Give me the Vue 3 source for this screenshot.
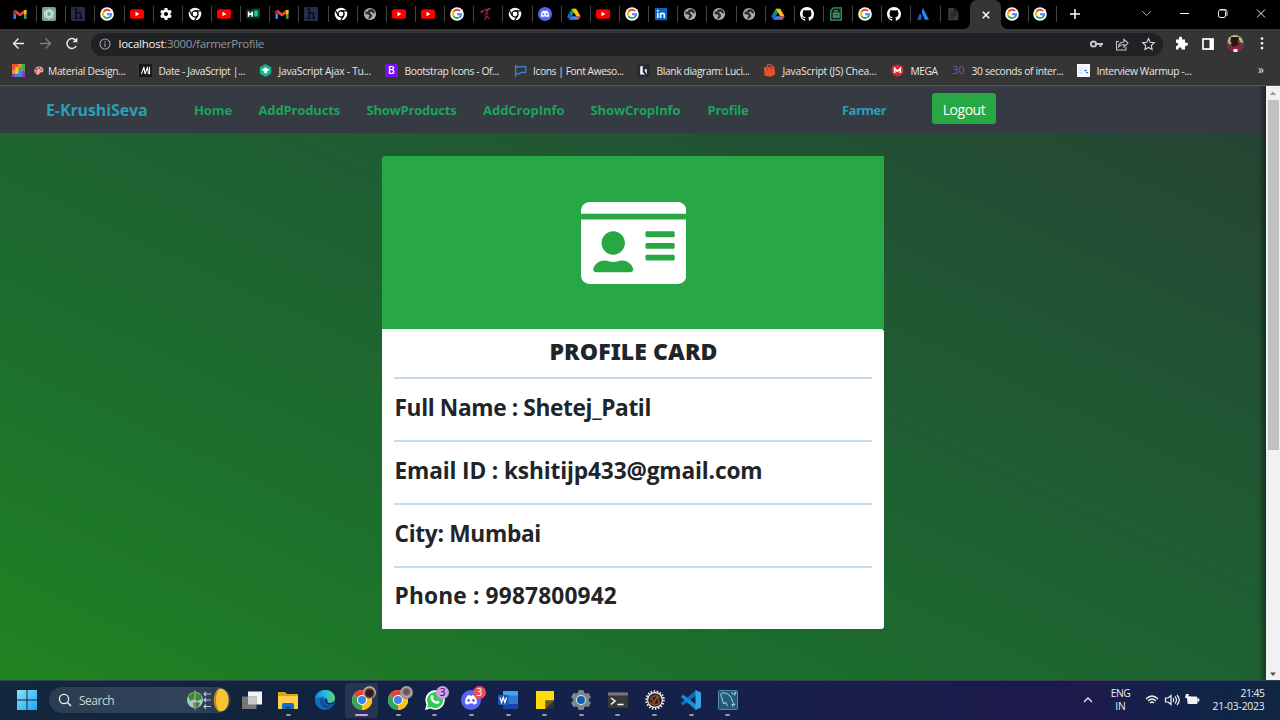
<script setup>
const tabIcons = [
  'gmail', 'gpt', 'hbox', 'google', 'youtube', 'gear', 'chromew', 'youtube', 'he', 'gmail', 'hbox',
  'chromew', 'globe', 'youtube', 'youtube', 'google', 'runner', 'chromew', 'discord', 'drive', 'youtube', 'google',
  'linkedin', 'globe', 'globe', 'globe', 'drive', 'github', 'sheet', 'google', 'github', 'atlassian', 'doc'
]

const bookmarks = [
  { icon: 'mosaic', width: 20.5, label: '', text: 0 },
  { icon: 'palette', width: 106.5, label: 'Material Design...', text: 77.5 },
  { icon: 'mdn', width: 120, label: 'Date - JavaScript |...', text: 86.5 },
  { icon: 'leaf', width: 126, label: 'JavaScript Ajax - Tu...', text: 92.5 },
  { icon: 'boot', mark: 'B', width: 128.5, label: 'Bootstrap Icons - Of...', text: 94.5 },
  { icon: 'flag', width: 123.5, label: 'Icons | Font Aweso...', text: 90.5 },
  { icon: 'lucid', width: 126, label: 'Blank diagram: Luci...', text: 93 },
  { icon: 'bag', width: 128, label: 'JavaScript (JS) Chea...', text: 94 },
  { icon: 'mega', width: 61, label: 'MEGA', text: 27 },
  { icon: 'thirty', mark: '30', width: 125, label: '30 seconds of inter...', text: 92 },
  { icon: 'warm', width: 130, label: 'Interview Warmup -...', text: 95 }
]

const links = [
  { label: 'Home', text: 38, gap: 26.5 },
  { label: 'AddProducts', text: 81.5, gap: 26.5 },
  { label: 'ShowProducts', text: 90, gap: 26.5 },
  { label: 'AddCropInfo', text: 81.5, gap: 26 },
  { label: 'ShowCropInfo', text: 90, gap: 27 },
  { label: 'Profile', text: 41, gap: 0 }
]

const details = [
  { label: 'Full Name : Shetej_Patil', text: 256.5 },
  { label: 'Email ID : kshitijp433@gmail.com', text: 368 },
  { label: 'City: Mumbai', text: 146.5 },
  { label: 'Phone : 9987800942', text: 222.5 }
]

const apps = [
  { icon: 'taskview' },
  { icon: 'folder', run: true },
  { icon: 'edge' },
  { icon: 'chrome', active: true, avatar: 'dark' },
  { icon: 'chrome', run: true, avatar: 'light' },
  { icon: 'whatsapp', run: true, badge: '3', tone: 'violet' },
  { icon: 'discord', run: true, badge: '3', tone: 'red' },
  { icon: 'word', run: true },
  { icon: 'notes', run: true },
  { icon: 'settings', run: true },
  { icon: 'terminal', run: true },
  { icon: 'eclipse', run: true },
  { icon: 'vscode', run: true },
  { icon: 'mysql', run: true }
]

// Tracks a label out (or in) so that it takes up the given width in pixels.
const vFit = {
  mounted(el, { value }) {
    const count = el.textContent.length
    if (!value || !count) return
    const natural = el.getBoundingClientRect().width
    el.style.letterSpacing = (value - natural) / count + 'px'
  }
}
</script>

<template>
  <div class="screen">
    <svg class="defs" aria-hidden="true">
      <symbol id="gmail" viewBox="0 0 16 16">
        <path d="M2 13.5V4.5" stroke="#4285f4" stroke-width="3" /><path d="M14 13.5V4.5" stroke="#34a853" stroke-width="3" />
        <path d="M2 4.5 8 9l6-4.500" fill="none" stroke="#ea4335" stroke-width="3.200" stroke-linejoin="round" />
        <path d="M12.500 3.500 15.500 3v4l-3 2z" fill="#fbbc04" /><path d="M.5 3.500 3.500 5v4L.5 7z" fill="#c5221f" />
      </symbol>
      <symbol id="gpt" viewBox="0 0 16 16">
        <rect x="0" y="0" width="16" height="16" rx="2" fill="#74a593" />
        <g fill="none" stroke="#dcebe5" stroke-width="1.100"><ellipse cx="8" cy="8" rx="2.700" ry="5.500" /><ellipse cx="8" cy="8" rx="2.700" ry="5.500" transform="rotate(60 8 8)" /><ellipse cx="8" cy="8" rx="2.700" ry="5.500" transform="rotate(120 8 8)" /></g>
      </symbol>
      <symbol id="hbox" viewBox="0 0 16 16">
        <rect width="16" height="16" rx="1" fill="#252d4b" />
        <path d="M4 2.500h2V13M4 13h4M6 7.500c2-2 5-1.500 5 .5v5M9.500 13H13" fill="none" stroke="#080b18" stroke-width="1.700" />
      </symbol>
      <symbol id="google" viewBox="0 0 16 16">
        <circle cx="8" cy="8" r="7.800" fill="#fff" />
        <g fill="none" stroke-width="2.300"><path d="M4.100 5.400A4.700 4.700 0 0 1 11.500 4.700" stroke="#ea4335" /><path d="M4.100 10.600a4.700 4.700 0 0 1 0-5.200" stroke="#fbbc05" /><path d="M11.300 11.300a4.700 4.700 0 0 1-7.200-.7" stroke="#34a853" /><path d="M8 8.200h4.700c0 1.300-.5 2.400-1.400 3.200" stroke="#4285f4" /></g>
      </symbol>
      <symbol id="youtube" viewBox="0 0 16 16"><rect y="2.500" width="16" height="11" rx="3" fill="#f00" /><path d="M6.300 5.500v5L10.700 8z" fill="#fff" /></symbol>
      <symbol id="gear" viewBox="0 0 16 16">
        <g fill="#fff"><circle cx="8" cy="8" r="5.200" /><rect x="6.300" y="1.200" width="3.400" height="13.600" rx=".6" /><rect x="6.300" y="1.200" width="3.400" height="13.600" rx=".6" transform="rotate(60 8 8)" /><rect x="6.300" y="1.200" width="3.400" height="13.600" rx=".6" transform="rotate(120 8 8)" /></g><circle cx="8" cy="8" r="2.400" fill="#000" />
      </symbol>
      <symbol id="chromew" viewBox="0 0 16 16">
        <circle cx="8" cy="8" r="7.200" fill="#fff" /><circle cx="8" cy="8" r="3.500" fill="none" stroke="#000" stroke-width="1.400" />
        <path d="M8 4.500h6.500M5 9.800 1.800 4.300M11 9.800 7.700 15.500" stroke="#000" stroke-width="1.400" />
      </symbol>
      <symbol id="he" viewBox="0 0 16 16"><rect y="2" width="16" height="12" fill="#14202b" /><rect x="8" y="2" width="8" height="9" fill="#0b4c45" /><path d="M3 5v6M7 5v6M3 8h4" stroke="#fff" stroke-width="2" /><path d="M9.500 4.200h4v6.600h-4z" fill="#10db62" /></symbol>
      <symbol id="globe" viewBox="0 0 16 16"><circle cx="8" cy="8" r="7" fill="#a9acaf" /><path d="M8.500 2.500c-2 0-3 1.500-2.500 2.500H3.500L2.500 8l4 .5 1.500 2H6.500v3.500h1l3-3.500-.5-2L8.500 7 7 6.500l3-1.500 1.500 2H14l-1.500-3-2-1.500z" fill="#292a2d" /></symbol>
      <symbol id="runner" viewBox="0 0 16 16"><path d="M2 7 7 3l5-1-4 4M7 7l3-1M6 10l3 1-3 4M9 10l3 4" fill="none" stroke="#7d2030" stroke-width="1.500" /><path d="M8 3.500 13 2M2 5.500 5 4" stroke="#615558" stroke-width="1.400" /><circle cx="8.500" cy="7.500" r="2" fill="#6d1427" /></symbol>
      <symbol id="discord" viewBox="0 0 16 16">
        <circle cx="8" cy="8" r="8" fill="#5865f2" />
        <path d="M5 4.600c1-.5 1.500-.5 2-.6l.3.6h1.400l.3-.6c.5.100 1 .100 2 .6 1.400 2 1.900 4 1.700 6-.8.700-1.600 1-2.300 1.200l-.7-1H6.300l-.7 1c-.8-.2-1.600-.5-2.300-1.200-.2-2 .3-4 1.700-6z" fill="#fff" /><circle cx="6.100" cy="8.300" r="1.100" fill="#5865f2" /><circle cx="9.900" cy="8.300" r="1.100" fill="#5865f2" />
      </symbol>
      <symbol id="drive" viewBox="0 0 16 16"><path d="M5.500 2h5L8 6.300 3 14.500.5 10.500z" fill="#0f9d58" /><path d="M5.500 2h5l5 8.500h-5z" fill="#ffc107" /><path d="M3 14.500.5 10.500l2.500-4L5.600 10z" fill="#1967d2" /><path d="M5.500 10.500h10L13 14.500H3z" fill="#4285f4" /><path d="M10.500 10.500h5L13 14.500z" fill="#ea4335" /></symbol>
      <symbol id="linkedin" viewBox="0 0 16 16"><rect x="1" y="1" width="14" height="14" rx="1" fill="#0a66c2" /><path d="M4.300 6.500v6M7.500 12.500v-6M7.500 9c0-2.500 4.300-2.500 4.300 0v3.500" fill="none" stroke="#fff" stroke-width="1.800" /><circle cx="4.300" cy="4.200" r="1.150" fill="#fff" /></symbol>
      <symbol id="github" viewBox="0 0 16 16"><path fill="#fff" d="M8 0C3.580 0 0 3.580 0 8c0 3.540 2.290 6.530 5.470 7.590.4.070.55-.17.55-.38 0-.19-.01-.82-.01-1.490-2.010.37-2.530-.49-2.690-.94-.09-.23-.48-.94-.82-1.130-.28-.15-.68-.52-.01-.53.63-.01 1.080.58 1.230.82.72 1.210 1.870.87 2.330.66.07-.52.28-.87.51-1.070-1.780-.2-3.640-.89-3.640-3.950 0-.87.31-1.590.82-2.150-.08-.2-.36-1.020.08-2.120 0 0 .67-.21 2.200.82a7.420 7.420 0 0 1 4 0c1.530-1.040 2.200-.82 2.200-.82.44 1.100.16 1.920.08 2.120.51.56.82 1.270.82 2.150 0 3.070-1.870 3.750-3.650 3.950.29.25.54.73.54 1.480 0 1.070-.01 1.930-.01 2.200 0 .21.15.46.55.38A8.010 8.010 0 0 0 16 8c0-4.420-3.580-8-8-8z" /></symbol>
      <symbol id="sheet" viewBox="0 0 16 16"><path d="M5 1h9v14H2V4z" fill="#0c2117" stroke="#3f8d65" stroke-width="1.500" /><path d="M5.500 4.500h5M5 7h6.500v4.500H5z" stroke="#4b9b70" stroke-width="1.300" fill="#2c6e4a" /></symbol>
      <symbol id="atlassian" viewBox="0 0 16 16"><path d="M4.500 7c2 2 2.500 4.500 1.500 7.500H1.200z" fill="#1763d1" /><path d="M8 1.200 14.800 14.500H10C8.500 10 5 6.500 8 1.200z" fill="#2684ff" /></symbol>
      <symbol id="doc" viewBox="0 0 16 16"><path d="M2.500 1h7L14 5.500V15H2.500z" fill="#3c3c3c" /><path d="M9.500 1v4.500H14M5 7.500h6.500M5 10h6.500M5 12.500h4" stroke="#111" fill="none" /></symbol>

      <symbol id="mosaic" viewBox="0 0 16 16"><rect width="16" height="16" fill="#f6c928" /><path d="M0 0h4v8H0zM4 0h4v4H4z" fill="#f04e36" /><path d="M8 0h4v4H8zM0 8h4v4H0z" fill="#f7912d" /><path d="M12 0h4v8h-4zM8 4h4v4H8z" fill="#42ae53" /><path d="M8 8h4v8H8zM4 12h4v4H4z" fill="#3b82e3" /><path d="M12 8h4v8h-4zM0 12h4v4H0z" fill="#7549b7" /></symbol>
      <symbol id="palette" viewBox="0 0 16 16"><path d="M9 2c8 0 8 10 2 9-3 0 0 4-4 3-8-2-6-12 2-12z" fill="#f0a9a9" /><circle cx="5" cy="6" r="1.600" fill="#803c38" /><circle cx="9" cy="4.500" r="1.500" fill="#ab4f6b" /><circle cx="4.500" cy="10" r="1.400" fill="#d44a44" /><circle cx="12" cy="7" r="1.500" fill="#5b7085" /></symbol>
      <symbol id="mdn" viewBox="0 0 16 16"><rect width="16" height="16" fill="#17171a" /><path d="m3 12.500 3-9 1.500 9 3-9 1 9M13 3.500v9" fill="none" stroke="#fff" stroke-width="1.300" /></symbol>
      <symbol id="leaf" viewBox="0 0 16 16"><path d="m8 0 7 4v8l-7 4-7-4V4z" fill="#14b391" /><path d="m3 7.500 5-3.500 5 3.500-3 1.500v2.500H6V9z" fill="#e9fff8" /></symbol>
      <symbol id="flag" viewBox="0 0 16 16"><path d="M2 1v15M2 3.500h12.500v7H9c-1.500 0-1 1.500-3 1.500H2" fill="none" stroke="#397fc4" stroke-width="1.800" /></symbol>
      <symbol id="lucid" viewBox="0 0 16 16"><rect width="16" height="16" rx="1" fill="#222b36" /><path d="m4 3 3-1v8l3 3H4z" fill="#fff" /><path d="m9 7 3-1v7z" fill="#fff" /></symbol>
      <symbol id="bag" viewBox="0 0 16 16"><path d="m1 4 13-1 1 10-6 3-7-2z" fill="#e65127" /><path d="M5 6V3c0-3 6-3 6 0v3" stroke="#db502b" stroke-width="1.500" fill="none" /><path d="M5 5v2M10 4v3" stroke="#7d341c" /></symbol>
      <symbol id="mega" viewBox="0 0 16 16"><circle cx="8" cy="8" r="7.500" fill="#d9272e" /><path d="M4.500 11V5.500L8 9l3.500-3.500V11" fill="none" stroke="#fff" stroke-width="2" /></symbol>
      <symbol id="warm" viewBox="0 0 16 16"><rect width="16" height="16" fill="#f7f9fd" /><path d="M2 5h5M2 8h5M2 11h5" stroke="#d1daf3" stroke-width="1.500" /><path d="M9 8h3M11 10.500h2.500" stroke="#4667ea" stroke-width="1.600" /></symbol>

      <symbol id="windows" viewBox="0 0 20 20"><linearGradient id="gw" x1="0" y1="0" x2="1" y2="1"><stop stop-color="#8be1fb" /><stop offset="1" stop-color="#1aa7f5" /></linearGradient><path d="M0 0h9.500v9.500H0zM10.500 0H20v9.500h-9.500zM0 10.500h9.500V20H0zM10.500 10.500H20V20h-9.500z" fill="url(#gw)" /></symbol>
      <symbol id="taskview" viewBox="0 0 20 20"><path d="M6 1.500h14v13H6z" fill="#f3f3f3" /><path d="M0 6.500h14.500V19H0z" fill="#777" /><path d="M6 6.500h8.500v8H6z" fill="#c8c8c8" /></symbol>
      <symbol id="folder" viewBox="0 0 20 20"><path d="M0 2h7l2 2h11v15H0z" fill="#e1a318" /><path d="M0 6h20v13H0z" fill="#ffcf48" /><path d="M4 19v-4q0-2 2-2h8q2 0 2 2v4z" fill="#0b70c6" /><path d="M7 16.500h6V19H7z" fill="#164c88" /></symbol>
      <symbol id="edge" viewBox="0 0 20 20"><linearGradient id="ge" x1="0" x2="1"><stop stop-color="#168de0" /><stop offset=".55" stop-color="#26bad9" /><stop offset="1" stop-color="#65d75d" /></linearGradient><circle cx="10" cy="10" r="10" fill="#126fbd" /><path d="M0 9C1-3 19-3 20 8c0 5-6 6-8 4 2-4-6-8-12-3z" fill="url(#ge)" /><path d="M6 8c-3 6 2 12 9 10 2-.5 3-2 3.500-3.500C14 17 8 15 9 10z" fill="#154c9b" /><path d="M10.500 8.500c-1 2-.5 5 3 6 2 .4 4-.3 5.500-1.500L20 10c-1 3-7 4-8 2 1-1 .5-3-1.500-3.500z" fill="#122545" /></symbol>
      <symbol id="chrome" viewBox="0 0 20 20"><circle cx="10" cy="10" r="10" fill="#fff" /><path d="M10 10 1.340 5A10 10 0 0 1 18.660 5z" fill="#e94335" /><path d="M10 10 18.660 5A10 10 0 0 1 10 20z" fill="#fbc116" /><path d="M10 10v10A10 10 0 0 1 1.340 5z" fill="#33a852" /><path d="M10 5h8.660l-4.300 7.500z" fill="#fbc116" /><circle cx="10" cy="10" r="5" fill="#fff" /><circle cx="10" cy="10" r="4" fill="#3d82ee" /></symbol>
      <symbol id="whatsapp" viewBox="0 0 20 20"><path d="M0 20 1.500 14.500A9.700 9.700 0 1 1 5.500 18.500z" fill="#fff" /><path d="M2.200 18 3.200 14A8 8 0 1 1 6 16.900z" fill="#2fcc54" /><path d="M6.400 5.500c1-1 1.600 0 2 1.200.7 1.200-.6 1.300-.3 2.100 1 1.700 1.800 2.300 3 2.700.6.200.9-1 1.500-.9 1 .4 2.400.9 2 1.700-1 2.500-3.800 1.800-5.800.5-2-1.400-4.800-4.700-2.400-7.300z" fill="#fff" /></symbol>
      <symbol id="word" viewBox="0 0 20 20"><path d="M5 1h15v18H5z" fill="#2f79cf" /><path d="M5 1h15v4.500H5z" fill="#42a5ee" /><path d="M5 14h15v5H5z" fill="#1447a5" /><rect y="5" width="10.500" height="10" rx="1" fill="#1759bd" /><path d="m2 7.500 1.600 5 1.700-5 1.600 5 1.700-5" fill="none" stroke="#fff" stroke-width="1.200" /></symbol>
      <symbol id="notes" viewBox="0 0 20 20"><path d="M1 1h18v18H1z" fill="#ffdc08" /><path d="M10.500 10.500H19V19h-8.500z" fill="#2e3140" /><path d="M10.500 19v-8.500H19z" fill="#6b5a26" /></symbol>
      <symbol id="settings" viewBox="0 0 20 20"><g fill="#7e8790"><circle cx="10" cy="10" r="8" /><rect x="7" width="6" height="20" rx="1.500" /><rect x="7" width="6" height="20" rx="1.500" transform="rotate(60 10 10)" /><rect x="7" width="6" height="20" rx="1.500" transform="rotate(120 10 10)" /></g><circle cx="10" cy="10" r="5" fill="#d7e3ed" /><circle cx="10" cy="10" r="4" fill="#115fac" /></symbol>
      <symbol id="terminal" viewBox="0 0 20 20"><path d="M0 2.500h20V18H0z" fill="#383838" /><path d="M0 2.500h20v3H0z" fill="#777" /><path d="M3 8l4 3-4 3.500M9.500 14.500h6" fill="none" stroke="#fff" stroke-width="1.500" /></symbol>
      <symbol id="eclipse" viewBox="0 0 20 20"><circle cx="10" cy="10" r="8.800" fill="none" stroke="#eee" stroke-width="2" stroke-dasharray="1.500 1.570" /><circle cx="10" cy="10" r="7.400" fill="#29211f" stroke="#eee" stroke-width="1.200" /><path d="M5 9q5-6 10-1M5 12q5 6 10 0M6 7l3 6 3-7 2 7" stroke="#8d4b2c" stroke-width="1.400" fill="none" /></symbol>
      <symbol id="vscode" viewBox="0 0 20 20"><path d="M15 0 0 13l2 2.500L17 4z" fill="#0873b9" /><path d="M15 20 0 7l2-2.500L17 16z" fill="#168dd7" /><path d="m14.500 0 5.500 2.500v15L14.500 20z" fill="#30a4ec" /></symbol>
      <symbol id="mysql" viewBox="0 0 20 20"><rect x=".5" y=".5" width="19" height="19" rx="1" fill="#235c7b" stroke="#488baa" /><path d="M4 8c-2-3-1-6 1-5 5 0 8 3 9 7 .5 2 2 3 3 5l-3-1 1 3M4 8c1 2 0 4 2 6l1.500-2 2 4M13 2.500l2.500 1.500L18 2l-1.500 3.500" fill="none" stroke="#b8d3e0" stroke-width="1" /></symbol>
    </svg>

    <header class="browser">
      <div class="tabs">
        <div class="tabstrip">
          <div v-for="(icon, i) in tabIcons" :key="i" class="tab"><svg class="fav"><use :href="'#' + icon" /></svg></div>
        </div>
        <div class="active-tab"><svg viewBox="0 0 8 8"><path d="m.8.8 6.400 6.400M7.200.8.800 7.200" stroke="#fff" stroke-width="1.500" /></svg></div>
        <div class="tab end"><svg class="fav"><use href="#google" /></svg></div>
        <div class="tab end"><svg class="fav"><use href="#google" /></svg></div>
        <svg class="plus" viewBox="0 0 10 10"><path d="M5 0v10M0 5h10" stroke="#fff" stroke-width="1.500" /></svg>
        <svg class="winctl" viewBox="0 0 140 24"><g fill="none" stroke="#e8e8e8" stroke-width="1"><path d="m12 10 4.500 4.500L21 10" stroke="#aaa" /><path d="M50 12.500h9" stroke="#fff" /><rect x="88.500" y="9" width="7" height="7.500" rx="1.500" /><path d="M90 8.500h5q2 0 2 2V15" /><path d="m127 8.500 8 8M135 8.500l-8 8" /></g></svg>
      </div>

      <div class="toolbar">
        <svg class="navicons" viewBox="0 0 91 30"><g fill="none" stroke-width="1.400"><path d="M24 14.500H13.500M18.500 9.500l-5 5 5 5" stroke="#eee" /><path d="M40 14.500h10.500M45.500 9.500l5 5-5 5" stroke="#7b7b7b" /><path d="M76.300 17a5 5 0 1 1-.3-5.500" stroke="#eee" /><path d="M77.300 8.500v4.800h-4.800z" fill="#eee" /></g></svg>
        <div class="address">
          <svg class="info" viewBox="0 0 12 12"><circle cx="6" cy="6" r="5" fill="none" stroke="#9aa0a6" stroke-width="1.100" /><path d="M6 5.300v3.500M6 3v1.200" stroke="#9aa0a6" stroke-width="1.200" /></svg>
          <span v-fit="145.5" class="url"><b>localhost</b>:3000/farmerProfile</span>
          <svg class="urlicons" viewBox="0 0 70 20"><g fill="none" stroke="#c3c5c7" stroke-width="1.100"><circle cx="5.500" cy="10" r="2.600" stroke-width="2" /><path d="M8 10h7M12.500 10v3" stroke-width="2" /><path d="M31 7.500h-2.500v8.500h9.500v-3M30.500 13c.5-3.500 3-5 5.500-5V5.300l4 3.800-4 3.800V10.500c-2 0-4 .7-5.500 2.500z" /><path d="m60.500 4.500 1.700 3.700 4.100.5-3 2.800.8 4-3.600-2-3.600 2 .8-4-3-2.800 4.100-.5z" stroke="#ddd" /></g></svg>
        </div>
        <svg class="ext" viewBox="0 0 100 30"><path d="M8 11h3c-1-4 4-4 3 0h3v3.200c4-.8 4 4 0 3.200V21h-3.500c.5-3-3.500-3-3 0H8v-3.600c3 .5 3-3.500 0-3z" fill="#fff" transform="translate(0 -.5)" /><rect x="35" y="10" width="10" height="10" fill="none" stroke="#fff" stroke-width="1.700" /><path d="M41.500 10h4v11h-4z" fill="#fff" /><circle cx="67.500" cy="14.500" r="9" fill="#5a3c35" /><path d="M60.500 9q6-6 13 0l2 5-4-1-3-4-5 4-4 1z" fill="#b9bd91" /><path d="M60.500 19q7-5 13 0-5 6-13 0z" fill="#9c1c42" /><path d="M63 8h8l-1 8-5 2-3-4z" fill="#2a1712" /><circle cx="62" cy="14" r="1.500" fill="#a7aa92" /><circle cx="71" cy="12" r="1.200" fill="#8b5140" /><path d="M65.500 20h4v3h-4z" fill="#f2e9ea" /><g fill="#fff"><circle cx="94" cy="9.500" r="1.300" /><circle cx="94" cy="14.300" r="1.300" /><circle cx="94" cy="19.100" r="1.300" /></g></svg>
      </div>

      <div class="bookmarks">
        <div v-for="b in bookmarks" :key="b.icon" class="bookmark" :class="b.icon" :style="{ width: b.width + 'px' }">
          <span v-if="b.mark" class="mark">{{ b.mark }}</span>
          <svg v-else><use :href="'#' + b.icon" /></svg>
          <span v-fit="b.text">{{ b.label }}</span>
        </div>
        <span class="more">»</span>
      </div>
    </header>

    <div class="viewport">
      <main class="page">
        <nav class="navbar">
          <a v-fit="101.5" class="brand">E-KrushiSeva</a>
          <div class="links"><a v-for="l in links" :key="l.label" v-fit="l.text" :style="{ marginRight: l.gap + 'px' }">{{ l.label }}</a></div>
          <a v-fit="44" class="role">Farmer</a>
          <button class="logout"><span v-fit="42.5">Logout</span></button>
        </nav>
        <section class="card">
          <div class="banner">
            <svg viewBox="0 32 576 448"><path fill="#fff" d="M528 32H48C21.500 32 0 53.500 0 80v16h576V80c0-26.500-21.500-48-48-48zM0 432c0 26.500 21.500 48 48 48h480c26.500 0 48-21.500 48-48V128H0v304zm352-232c0-4.400 3.600-8 8-8h144c4.400 0 8 3.600 8 8v16c0 4.400-3.600 8-8 8H360c-4.400 0-8-3.600-8-8v-16zm0 64c0-4.400 3.600-8 8-8h144c4.400 0 8 3.600 8 8v16c0 4.400-3.600 8-8 8H360c-4.400 0-8-3.600-8-8v-16zm0 64c0-4.400 3.600-8 8-8h144c4.400 0 8 3.600 8 8v16c0 4.400-3.600 8-8 8H360c-4.400 0-8-3.600-8-8v-16zM176 192c35.300 0 64 28.700 64 64s-28.700 64-64 64-64-28.700-64-64 28.700-64 64-64zM67.100 396.200C75.500 370.500 99.600 352 128 352h8.200c12.300 5.100 25.700 8 39.800 8s27.600-2.900 39.800-8h8.200c28.400 0 52.500 18.500 60.900 44.200 3.200 9.900-5.200 19.800-15.600 19.800H82.700c-10.400 0-18.800-10-15.600-19.800z" /></svg>
          </div>
          <div class="body">
            <h2><span v-fit="168">PROFILE CARD</span></h2>
            <div v-for="d in details" :key="d.label" class="row"><span v-fit="d.text">{{ d.label }}</span></div>
          </div>
        </section>
      </main>
      <div class="scrollbar">
        <svg viewBox="0 0 14 14"><path d="M4 9h6L7 5.500z" fill="#999" /></svg>
        <div class="thumb"></div>
        <svg class="down" viewBox="0 0 14 14"><path d="M4 5.500h6L7 9z" fill="#505050" /></svg>
      </div>
    </div>

    <footer class="taskbar">
      <svg class="start"><use href="#windows" /></svg>
      <div class="search">
        <svg class="glass" viewBox="0 0 14 14"><circle cx="6" cy="6" r="4.600" fill="none" stroke="#eee" stroke-width="1.300" /><path d="m9.500 9.500 3.500 3.500" stroke="#eee" stroke-width="1.400" /></svg>
        <span v-fit="35">Search</span>
        <svg class="equinox" viewBox="0 0 46 26"><circle cx="10" cy="13" r="8" fill="#a3c7d0" /><path d="M3 9l6-4 7 3 1 4-5 2-3-2-4 2z" fill="#378d32" /><path d="m8 16 4-1 3 1-2 4-4 1z" fill="#318743" /><path d="M10 3v20" stroke="#e4a06f" stroke-width="1" /><g stroke="#b7c7d2" stroke-width="1.200" fill="none"><path d="M19 7h7M21 5l-2 2 2 2M19 13h7M21 11l-2 2 2 2M19 19.500h7M21 17.500l-2 2 2 2" /></g><path d="M34 1.500c13-1 13 24 0 23-5-5-5-17 0-23z" fill="#f9c233" /><path d="M34 1.500c-4 6-4 17 0 23-7-4-7-19 0-23z" fill="#cf8119" /></svg>
      </div>
      <div class="apps">
        <div v-for="(a, i) in apps" :key="i" class="app" :class="{ active: a.active, run: a.run }">
          <svg class="glyph"><use :href="'#' + a.icon" /></svg>
          <i v-if="a.avatar" class="avatar" :class="a.avatar"></i>
          <i v-if="a.badge" class="badge" :class="a.tone">{{ a.badge }}</i>
        </div>
      </div>
      <div class="tray">
        <svg class="chev" viewBox="0 0 10 6"><path d="m1 5 4-4 4 4" fill="none" stroke="#eee" stroke-width="1.300" /></svg>
        <div class="lang"><span v-fit="19.5">ENG</span><span>IN</span></div>
        <svg class="status" viewBox="0 0 56 16"><g fill="none" stroke="#f2f2f2" stroke-width="1.200"><path d="M1 7q6-6 12 0M3 9q4-4 8 0M5 11q2-2 4 0" /><path d="M20.500 6h2.500l3-2.500v9L23 10h-2.500zM28 6q1.500 2 0 4M30 4.500q3 3.500 0 7M32 3q4.500 5 0 10" /><rect x="43" y="5" width="9" height="6.500" rx="1" fill="#f2f2f2" /><path d="M53.500 6.500v3" stroke-width="1.700" /></g><path d="M41 2h3l-1 2.500h3L42 9l.5-3H40z" fill="#fff" /></svg>
        <div class="clock"><span v-fit="24">21:45</span><span v-fit="52">21-03-2023</span></div>
      </div>
    </footer>
  </div>
</template>

<style>
body { overflow: hidden; background: #000; }
</style>

<style scoped>
* { box-sizing: border-box; }
.screen { width: 1280px; height: 720px; display: flex; flex-direction: column; overflow: hidden; font-family: "Open Sans", "Noto Sans", sans-serif; }
.defs { position: absolute; width: 0; height: 0; }
svg { display: block; flex: none; }
span, a { white-space: nowrap; display: inline-block; flex: none; }
.browser { height: 86px; background: #353535; border-bottom: 1px solid #555; flex: none; }
.tabs { height: 29px; background: #000; display: flex; align-items: center; padding-bottom: 1px; }
.tabstrip { display: flex; margin-left: 8px; width: 961.500px; }
.tab { width: 29.150px; height: 16px; border-right: 1px solid #444; padding-left: 5px; display: flex; align-items: center; flex: none; }
.tabstrip .tab:last-child { border: 0; }
.tab.end { width: 28px; padding-left: 4.500px; }
.fav { width: 14px; height: 14px; }
.active-tab { position: relative; width: 31px; height: 29px; margin-bottom: -1px; background: #353535; border-radius: 7px 7px 0 0; display: flex; align-items: center; justify-content: center; padding-left: 1px; }
.active-tab::before, .active-tab::after { content: ""; position: absolute; bottom: 0; width: 6px; height: 6px; }
.active-tab::before { left: -6px; background: radial-gradient(circle at 0 0, transparent 5.500px, #353535 6px); }
.active-tab::after { right: -6px; background: radial-gradient(circle at 100% 0, transparent 5.500px, #353535 6px); }
.active-tab svg { width: 8px; height: 8px; }
.plus { width: 10px; height: 10px; margin-left: 13px; }
.winctl { width: 140px; height: 24px; margin-left: 50px; margin-bottom: 3px; }
.toolbar { height: 30px; display: flex; align-items: center; }
.navicons { width: 91px; height: 30px; }
.address { width: 1072px; height: 23px; border-radius: 12px; background: #202124; display: flex; align-items: center; }
.info { width: 12px; height: 12px; margin-left: 8px; }
.url { margin: -2px 0 0 7.500px; font-size: 11.500px; color: #92969a; }
.url b { font-weight: 400; color: #f1f1f1; }
.urlicons { width: 70px; height: 20px; margin-left: auto; margin-right: 5.500px; }
.ext { width: 100px; height: 30px; margin-left: 5px; }
.bookmarks { height: 23px; display: flex; align-items: center; padding-left: 12px; color: #e6e6e6; font-size: 10.300px; }
.bookmark { display: flex; align-items: center; flex: none; }
.bookmark svg { width: 13px; height: 13px; margin-right: 6.500px; }
.bookmark.palette svg { width: 11px; height: 11px; margin-right: 4.500px; }
.mark { width: 13px; height: 13px; margin-right: 6.500px; line-height: 13px; text-align: center; }
.boot .mark { background: #7212ee; color: #fff; border-radius: 1px; font-weight: 600; }
.thirty .mark { color: #8059ae; }
.more { margin-left: 51px; font-size: 12px; margin-top: -3px; }

.viewport { height: 595px; display: flex; flex: none; }
.page { position: relative; width: 1266px; background: linear-gradient(to top right, #218321 0%, #1c712c 26%, #1e6232 50%, #215333 74%, #274234 100%); }
.page::after { content: ""; position: absolute; right: 0; top: 0; width: 8px; height: 100%; background: linear-gradient(to right, transparent, rgba(0, 0, 0, .4)); }
.navbar { height: 47px; background: #363a42; display: flex; align-items: center; padding: 0 0 0 46px; font-weight: 700; font-size: 13px; color: #1da35c; }
.brand { font-size: 16px; font-weight: 700; color: #28a0b5; }
.links { display: flex; margin-left: 46.500px; }
.role { margin-left: 93.500px; color: #2c9fbb; }
.logout { width: 64px; height: 31px; margin: -2px 0 0 46px; padding: 1px 0 0; border: 0; border-radius: 3px; background: #28a745; color: #fff; font: 14px "Open Sans", sans-serif; }
.card { width: 502px; margin: 23px 0 0 382px; }
.banner { height: 173px; background: #28a745; border-radius: 3px 0 0 0; display: flex; justify-content: center; padding: 45.500px 0 0 1px; }
.banner svg { width: 105.500px; height: 82px; }
.body { height: 300px; background: #fff; border-radius: 0 3px 3px 0; padding: 0 12px; color: #212529; }
h2 { margin: 0; height: 48px; padding: 6px 0 0 1px; text-align: center; font-size: 23px; font-weight: 900; line-height: 32px; font-family: "Noto Sans", "Open Sans", sans-serif; }
.row { height: 63px; border-top: 2px solid #c5dcee; padding: 13px 0 0 .5px; font-size: 22.700px; font-weight: 700; line-height: 32px; }
.row:last-child { padding-top: 12px; }
.scrollbar { width: 14px; background: #f1f1f1; display: flex; flex-direction: column; align-items: center; }
.scrollbar svg { width: 14px; height: 14px; }
.thumb { width: 11px; height: 350px; background: #c1c1c1; }
.down { margin-top: auto; }

.taskbar { height: 39px; background: linear-gradient(90deg, #12283d 0, #11233e 22%, #13224a 36%, #172049 60%, #1c1a4b 80%, #1c1b4c 86%, #102449 93%, #0f2742 100%); box-shadow: 0 -1px 0 #30474f; position: relative; display: flex; align-items: center; color: #eee; flex: none; padding-bottom: 1px; }
.start { width: 20px; height: 20px; margin-left: 17px; }
.search { width: 182px; height: 26px; margin-left: 12px; border-radius: 13px; background: linear-gradient(90deg, #2a3d50, #304359 75%, #263b51); display: flex; align-items: center; font-size: 12px; color: #d1d5d9; }
.glass { width: 14px; height: 14px; margin: 0 7px 0 9px; }
.equinox { width: 46px; height: 26px; margin-left: auto; }
.apps { display: flex; height: 38px; margin-left: 2.400px; }
.app { position: relative; width: 36.640px; display: flex; align-items: center; justify-content: center; }
.glyph { width: 20px; height: 20px; position: relative; }
.app.active::before { content: ""; position: absolute; inset: 2px 2px 1px; border-radius: 3px; background: #283451; }
.app.run::after, .app.active::after { content: ""; position: absolute; bottom: 3px; left: 50%; width: 5px; height: 2px; margin-left: -2.500px; border-radius: 1px; background: #9298a5; }
.app.active::after { width: 13px; margin-left: -6.500px; background: #d49be6; }
.avatar { position: absolute; top: 5px; right: 4px; width: 13px; height: 13px; border-radius: 50%; }
.avatar.dark { background: radial-gradient(circle at 50% 55%, #321d19 0 35%, #81604f 50%, #ddc9b7 65%, #35201c 80%); }
.avatar.light { background: radial-gradient(circle at 50% 45%, #66545d 0 25%, #afa5a2 50%, #837680 80%); }
.badge { position: absolute; top: 5px; right: 4px; width: 13px; height: 13px; border-radius: 50%; text-align: center; font: 10px/13px "Open Sans", sans-serif; }
.badge.violet { background: #d69ae6; color: #1c1820; }
.badge.red { background: #e94f55; color: #fff; }
.tray { margin-left: auto; margin-right: 15.500px; display: flex; align-items: center; font-size: 10.300px; line-height: 13px; }
.chev { width: 10px; height: 6px; margin-right: 17.500px; }
.lang { width: 20px; display: flex; flex-direction: column; align-items: center; }
.status { width: 56px; height: 16px; margin: 0 10px 0 14px; }
.clock { width: 54px; display: flex; flex-direction: column; align-items: flex-end; }
</style>
